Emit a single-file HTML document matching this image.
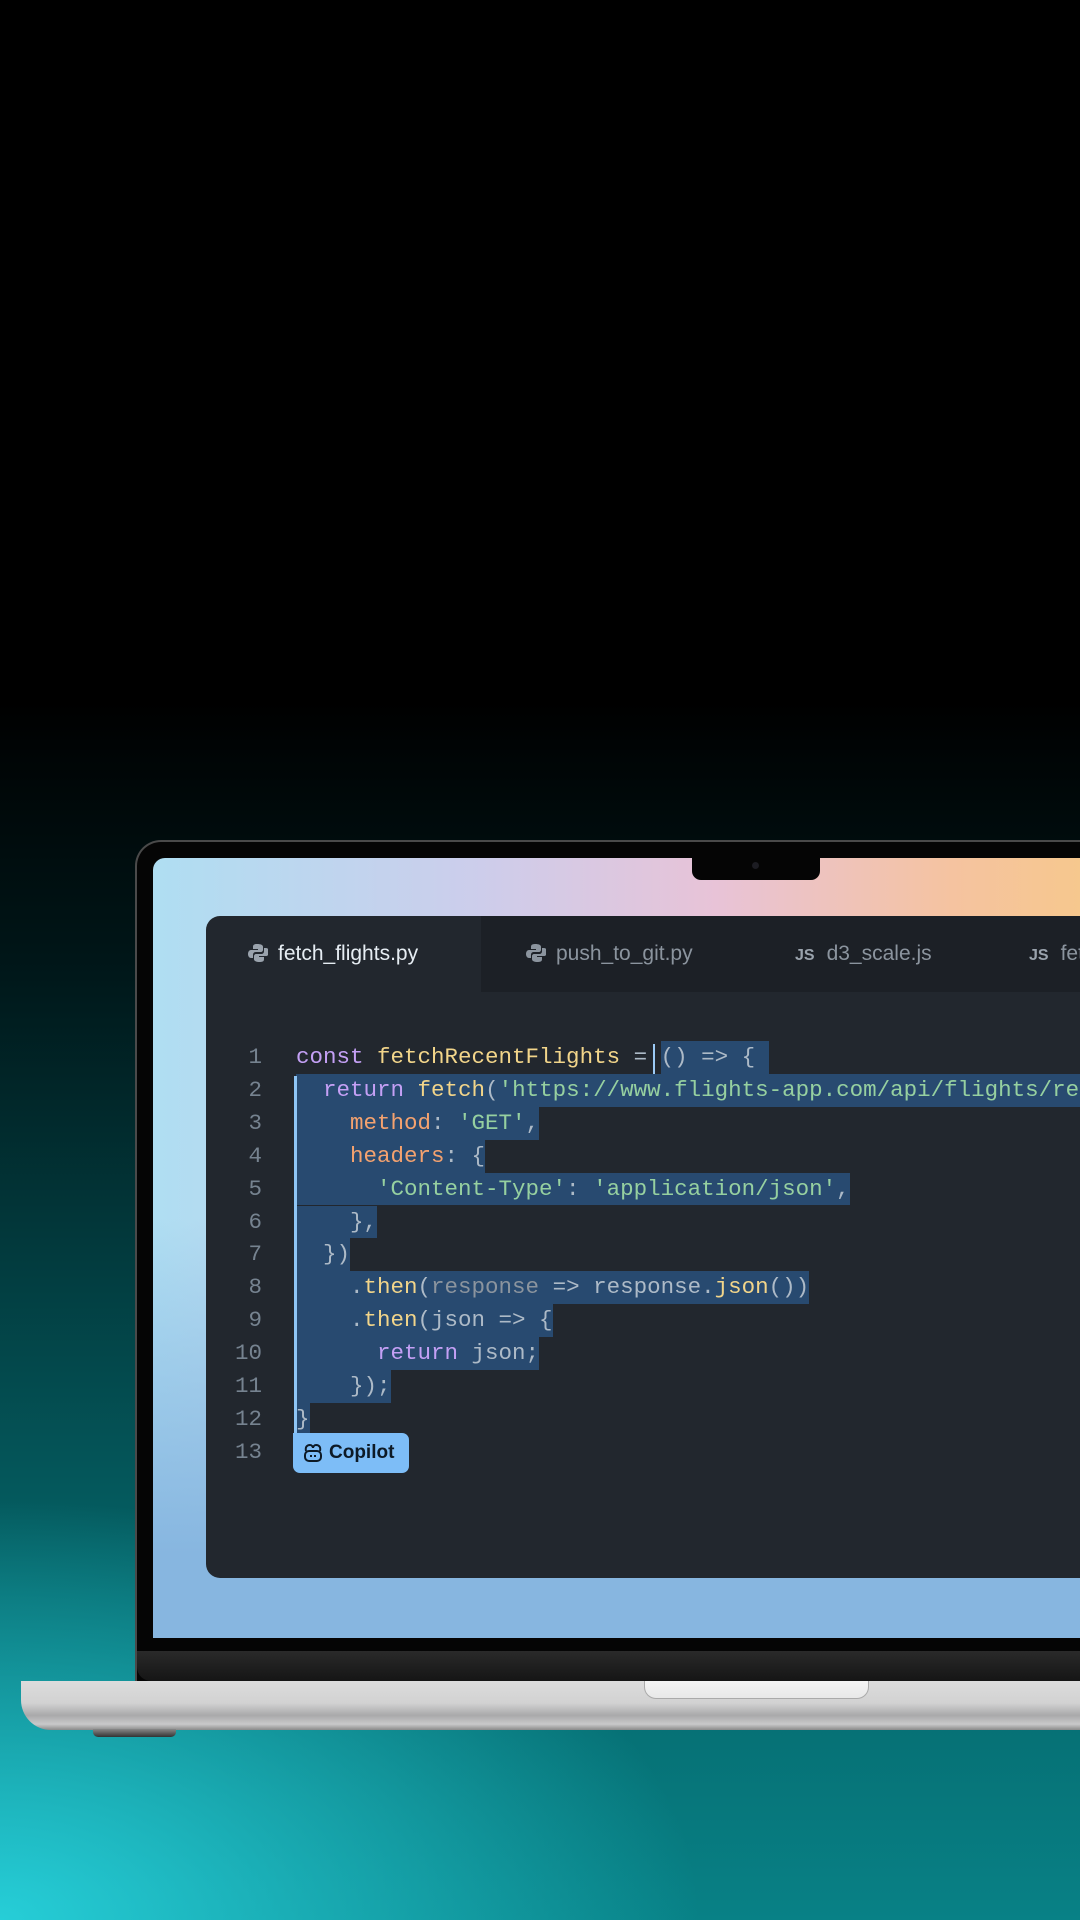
<!DOCTYPE html>
<html><head><meta charset="utf-8"><style>
*{margin:0;padding:0;box-sizing:border-box}
html,body{width:1080px;height:1920px;overflow:hidden;background:#000}
body{position:relative;background:
radial-gradient(ellipse 700px 420px at 0px 1920px,rgba(40,210,220,.95),rgba(40,210,220,0) 100%),
linear-gradient(180deg,#000 0px,#000 700px,#001618 960px,#023a3d 1250px,#05666a 1600px,#088186 1920px);}
.lid{position:absolute;left:135px;top:840px;width:1000px;height:842px;background:#050505;border-radius:26px 26px 0 0;border:2px solid #4a4a4a;border-bottom:none}
.screen{position:absolute;left:153px;top:858px;width:940px;height:780px;border-radius:12px 0 0 0;overflow:hidden;
background:linear-gradient(90deg,rgba(175,222,242,1) 0%,rgba(205,205,235,1) 35%,rgba(232,195,215,1) 60%,rgba(245,195,160,1) 85%,rgba(246,200,140,1) 100%)}
.screen:after{content:"";position:absolute;left:0;right:0;bottom:0;height:420px;background:linear-gradient(180deg,rgba(140,185,225,0),rgba(135,182,224,1) 80%);}
.notch{position:absolute;left:692px;top:856px;width:128px;height:24px;background:#050505;border-radius:0 0 9px 9px;z-index:5}
.notch i{position:absolute;left:60px;top:6px;width:7px;height:7px;border-radius:50%;background:#1c1c22}
.chin{position:absolute;left:137px;top:1651px;width:950px;height:30px;background:linear-gradient(180deg,#2a2a2a,#151515);border-radius:0 0 0 14px}
.base{position:absolute;left:21px;top:1681px;width:1070px;height:49px;border-radius:0 0 0 30px;
background:linear-gradient(180deg,#dcdcdc 0,#d2d2d2 45%,#a9a9aa 70%,#c9c9ca 88%,#8a8a8a 100%)}
.base i{position:absolute;left:623px;top:0;width:225px;height:18px;background:linear-gradient(180deg,#f4f4f4,#e8e8e8);border-radius:0 0 12px 12px;border:1px solid #aaa;border-top:none}
.foot{position:absolute;left:93px;top:1729px;width:83px;height:8px;background:linear-gradient(180deg,#888,#333);border-radius:0 0 5px 5px}
.ed{position:absolute;left:206px;top:916px;width:900px;height:662px;background:#22272e;border-radius:14px 0 0 14px;overflow:hidden;z-index:2}
.tabbar{position:absolute;left:275px;top:0;right:0;height:76px;background:#1c2026}
.tab{position:absolute;top:0;height:76px;font:21px "Liberation Sans",sans-serif;line-height:76px;color:#8b949e;white-space:nowrap}
.tab .js{font-weight:bold;font-size:16px;margin-right:12px;color:#9aa3ad}
.tab svg{vertical-align:-3px;margin-right:10px}
.code{position:absolute;left:0;top:125px;font:22.5px "Liberation Mono",monospace;line-height:32.9px;color:#adbac7;white-space:pre}
.ln{position:absolute;left:0;width:56px;text-align:right;color:#768390}
.l{position:absolute;left:90px}
.s{background:#284a70;display:inline-block;height:32.9px;vertical-align:top}
.k{color:#c4a0f5}.f{color:#f2d58a}.g{color:#96d0a0}.o{color:#f4a26f}.p{color:#8b949e}
.bar{position:absolute;left:88px;top:160px;width:3px;height:357px;background:#8ec5f5}
.cur{position:absolute;left:447px;top:128px;width:2px;height:30px;background:#9ccaf5}
.cop{position:absolute;left:87px;top:517px;width:116px;height:40px;background:#7dbdf7;border-radius:0 7px 7px 7px;font:bold 19px "Liberation Sans",sans-serif;line-height:40px;color:#0d1a26;padding-left:36px}
.cop svg{position:absolute;left:10px;top:10px}
</style></head><body>
<div class="lid"></div>
<div class="screen"></div>
<div class="notch"><i></i></div>
<div class="ed">
 <div class="tabbar"></div>
 <div class="tab" style="left:42px;color:#e6edf3"><svg width="20" height="20" viewBox="0 0 20 20"><path d="M9 1c-4 0-4 2-4 3v2h5v1H3C1 7 0 9 0 11s1 4 3 4h2v-3c0-2 1-3 3-3h5c1 0 2-1 2-2V4c0-2-2-3-6-3z M12 19c4 0 4-2 4-3v-2h-5v-1h7c2 0 3-2 3-4s-1-4-3-4h-2v3c0 2-1 3-3 3H8c-1 0-2 1-2 2v3c0 2 2 3 6 3z" fill="#9aa3ad"/></svg>fetch_flights.py</div>
 <div class="tab" style="left:320px"><svg width="20" height="20" viewBox="0 0 20 20"><path d="M9 1c-4 0-4 2-4 3v2h5v1H3C1 7 0 9 0 11s1 4 3 4h2v-3c0-2 1-3 3-3h5c1 0 2-1 2-2V4c0-2-2-3-6-3z M12 19c4 0 4-2 4-3v-2h-5v-1h7c2 0 3-2 3-4s-1-4-3-4h-2v3c0 2-1 3-3 3H8c-1 0-2 1-2 2v3c0 2 2 3 6 3z" fill="#8b949e"/></svg>push_to_git.py</div>
 <div class="tab" style="left:589px"><span class="js">JS</span>d3_scale.js</div>
 <div class="tab" style="left:823px"><span class="js">JS</span>fetch.js</div>
 <div class="code"><div class="ln" style="top:0">1</div><div class="ln" style="top:32.9px">2</div><div class="ln" style="top:65.8px">3</div><div class="ln" style="top:98.7px">4</div><div class="ln" style="top:131.6px">5</div><div class="ln" style="top:164.5px">6</div><div class="ln" style="top:197.4px">7</div><div class="ln" style="top:230.3px">8</div><div class="ln" style="top:263.2px">9</div><div class="ln" style="top:296.1px">10</div><div class="ln" style="top:329px">11</div><div class="ln" style="top:361.9px">12</div><div class="ln" style="top:394.8px">13</div>
<div class="l" style="top:0"><span class="k">const</span> <span class="f">fetchRecentFlights</span> = <span class="s">() =&gt; { </span></div>
<div class="l" style="top:32.9px"><span class="s">  <span class="k">return</span> <span class="f">fetch</span>(<span class="g">'https://www.flights-app.com/api/flights/recent'</span>, {     </span></div>
<div class="l" style="top:65.8px"><span class="s">    <span class="o">method</span>: <span class="g">'GET'</span>,</span></div>
<div class="l" style="top:98.7px"><span class="s">    <span class="o">headers</span>: {</span></div>
<div class="l" style="top:131.6px"><span class="s">      <span class="g">'Content-Type'</span>: <span class="g">'application/json'</span>,</span></div>
<div class="l" style="top:164.5px"><span class="s">    },</span></div>
<div class="l" style="top:197.4px"><span class="s">  })</span></div>
<div class="l" style="top:230.3px"><span class="s">    .<span class="f">then</span>(<span class="p">response</span> =&gt; response.<span class="f">json</span>())</span></div>
<div class="l" style="top:263.2px"><span class="s">    .<span class="f">then</span>(json =&gt; {</span></div>
<div class="l" style="top:296.1px"><span class="s">      <span class="k">return</span> json;</span></div>
<div class="l" style="top:329px"><span class="s">    });</span></div>
<div class="l" style="top:361.9px"><span class="s">}</span></div>
 </div>
 <div class="cur"></div>
 <div class="bar"></div>
 <div class="cop"><svg width="20" height="20" viewBox="0 0 20 20" fill="none" stroke="#0d1a26" stroke-width="2"><path d="M3 8c-1-4 1-6 4-6 2 0 3 2 3 3 0-1 1-3 3-3 3 0 5 2 4 6"/><rect x="2" y="8" width="16" height="10" rx="4"/><path d="M8 12v2M12 12v2"/></svg>Copilot</div>
</div>
<div class="chin"></div>
<div class="base"><i></i></div>
<div class="foot"></div>
</body></html>
